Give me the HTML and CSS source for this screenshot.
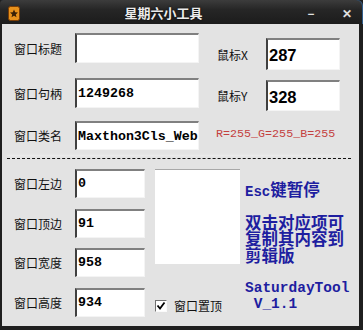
FILE: index.html
```html
<!DOCTYPE html>
<html lang="zh">
  <head>
    <meta charset="UTF-8" />
    <title>星期六小工具</title>
    <link rel="stylesheet" href="styles.css">
  </head>
  <body>
    <div class="window">
      <div class="titlebar">
        <svg class="app-icon" width="12" height="15" viewBox="0 0 12 15">
          <rect x="0.5" y="0.5" width="11" height="14" rx="2" fill="#e8921c" stroke="#7a3d05"/>
          <path d="M6 3.5 L7.2 6.3 L10 6.5 L7.8 8.4 L8.5 11.3 L6 9.7 L3.5 11.3 L4.2 8.4 L2 6.5 L4.8 6.3 Z" fill="#3a2208"/>
        </svg>
        <div class="title">星期六小工具</div>
        <div class="tb-btn min">&#8211;</div>
        <div class="tb-btn close">&#10005;</div>
      </div>

      <div class="client">
        <div class="top">
          <div class="col-left">
            <div class="row r1">
              <span class="lbl">窗口标题</span>
              <div class="field wide"></div>
            </div>
            <div class="row r2">
              <span class="lbl">窗口句柄</span>
              <div class="field wide">1249268</div>
            </div>
            <div class="row r3">
              <span class="lbl">窗口类名</span>
              <div class="field wide">Maxthon3Cls_Web</div>
            </div>
          </div>
          <div class="col-right">
            <div class="row m1">
              <span class="lbl mouse">鼠标X</span>
              <div class="field mouse-val">287</div>
            </div>
            <div class="row m2">
              <span class="lbl mouse">鼠标Y</span>
              <div class="field mouse-val">328</div>
            </div>
            <div class="rgb">R=255_G=255_B=255</div>
          </div>
        </div>

        <div class="sep"></div>

        <div class="bottom">
          <div class="col-left">
            <div class="row b1">
              <span class="lbl">窗口左边</span>
              <div class="field small">0</div>
            </div>
            <div class="row b2">
              <span class="lbl">窗口顶边</span>
              <div class="field small">91</div>
            </div>
            <div class="row b3">
              <span class="lbl">窗口宽度</span>
              <div class="field small">958</div>
            </div>
            <div class="row b4">
              <span class="lbl">窗口高度</span>
              <div class="field small">934</div>
            </div>
          </div>
          <div class="col-mid">
            <div class="preview"></div>
            <label class="topmost">
              <span class="check">
                <svg width="10" height="10" viewBox="0 0 10 10"><path d="M1.5 4.5 L4 7.5 L8.5 1.5" fill="none" stroke="#000" stroke-width="1.8"/></svg>
              </span>
              窗口置顶
            </label>
          </div>
          <div class="col-info">
            <div class="esc"><span class="ascii">Esc</span>键暂停</div>
            <div class="tip">双击对应项可<br>复制其内容到<br>剪辑版</div>
            <div class="ver">SaturdayTool<br>&nbsp;V_1.1</div>
          </div>
        </div>
      </div>
    </div>
  </body>
</html>
```

FILE: styles.css
```css
body {
  margin: 0;
  background: #1c1c1c;
  font-family: "Noto Sans CJK SC", "Liberation Sans", sans-serif;
}
.window {
  width: 363px;
  height: 330px;
  display: flex;
  flex-direction: column;
  background: #1f1f1f;
  overflow: hidden;
}
.titlebar {
  height: 24px;
  display: flex;
  align-items: center;
  background: linear-gradient(#3c3c3c, #262626 40%, #1c1c1c);
  border-top-right-radius: 6px;
  border-top-left-radius: 4px;
  box-shadow: inset -1px 0 0 #2f5c8a;
  color: #ececec;
}
.app-icon {
  margin-left: 8px;
  margin-top: 2px;
}
.title {
  flex: 1;
  text-align: center;
  font-size: 13px;
  font-weight: bold;
  padding-left: 4px;
  text-shadow: 0 0 2px #000;
}
.tb-btn {
  font-size: 13px;
  font-weight: bold;
  color: #e0e0e0;
  width: 16px;
  text-align: center;
}
.min {
  margin-right: 20px;
}
.close {
  margin-right: 8px;
  font-size: 12px;
}
.client {
  flex: 1;
  margin: 0 4px 4px 2px;
  background: #e3e3e3;
}
.top {
  display: flex;
  height: 126px;
}
.col-left {
  padding-left: 12px;
}
.row {
  display: flex;
  align-items: center;
}
.lbl {
  width: 61px;
  font-size: 12px;
  color: #111;
}
.field {
  box-sizing: border-box;
  height: 30px;
  background: #fff;
  border-top: 2px solid #808080;
  border-left: 2px solid #404040;
  border-right: 1px solid #f4f4f4;
  border-bottom: 1px solid #f4f4f4;
  padding-left: 1px;
  font-family: "Liberation Mono", monospace;
  font-weight: bold;
  font-size: 13.3px;
  line-height: 27px;
  color: #000;
  white-space: nowrap;
  overflow: hidden;
}
.wide {
  width: 124px;
}
.r1 {
  margin-top: 9px;
}
.r2 {
  margin-top: 15px;
}
.r3 {
  margin-top: 13px;
}
.r3 .field {
  height: 29px;
}
.col-right {
  margin-left: 18px;
}
.lbl.mouse {
  width: 49px;
}
.mouse-val {
  width: 74px;
  height: 32px;
  font-family: "Liberation Sans", sans-serif;
  font-size: 16.5px;
  line-height: 30px;
  padding-left: 1px;
}
.m1 {
  margin-top: 14px;
}
.m2 {
  margin-top: 10px;
}
.m2 .field {
  height: 31px;
}
.rgb {
  margin-top: 16px;
  margin-left: -1px;
  font-family: "Liberation Mono", monospace;
  font-size: 11.7px;
  line-height: 14px;
  color: #c4413f;
}
.sep {
  margin: 8px 8px 0 5px;
  height: 0;
  border-top: 1px dashed #111;
  box-shadow: 0 -3px 2px #f2f2f2;
}
.bottom {
  display: flex;
}
.bottom .col-left .row {
  margin-top: 10px;
}
.b2,
.b4 {
  padding-top: 1px;
}
.small {
  width: 70px;
  height: 29px;
  line-height: 26px;
}
.col-mid {
  margin-left: 10px;
  width: 85px;
}
.preview {
  margin-top: 10px;
  height: 94px;
  background: #fff;
  border-top: 1px solid #a8a8a8;
}
.topmost {
  display: flex;
  align-items: center;
  margin-top: 33px;
  font-size: 12px;
  color: #111;
}
.check {
  box-sizing: border-box;
  width: 12px;
  height: 12px;
  margin-right: 7px;
  background: #fff;
  border-top: 1px solid #707070;
  border-left: 1px solid #707070;
  border-right: 1px solid #fafafa;
  border-bottom: 1px solid #fafafa;
  display: flex;
  align-items: center;
  justify-content: center;
}
.col-info {
  margin-left: 5px;
  color: #1e1ea0;
  font-weight: bold;
  font-size: 16.5px;
  line-height: 16.5px;
  font-family: "Noto Sans CJK SC", sans-serif;
}
.ascii {
  font-family: "Liberation Mono", monospace;
  font-size: 14px;
}
.esc {
  margin-top: 22px;
}
.tip {
  margin-top: 13px;
}
.ver {
  margin-top: 17px;
  font-family: "Liberation Mono", monospace;
  font-size: 14.5px;
  line-height: 16px;
}
```
